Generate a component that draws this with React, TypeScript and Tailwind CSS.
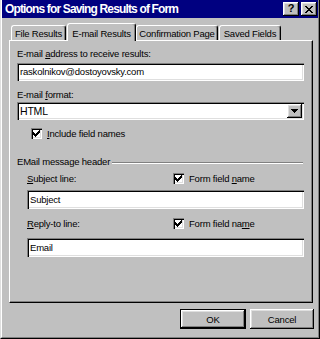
import React from "react"

const raised =
  "bg-[#c0c0c0] shadow-[inset_-1px_-1px_0_#000,inset_1px_1px_0_#fff,inset_-2px_-2px_0_#808080,inset_2px_2px_0_#dfdfdf]"
const sunken =
  "bg-white shadow-[inset_1px_1px_0_#808080,inset_2px_2px_0_#000,inset_-1px_-1px_0_#fff,inset_-2px_-2px_0_#dfdfdf]"

function Check() {
  return (
    <span className={`${sunken} w-[11px] h-[11px] flex items-center justify-center shrink-0`}>
      <svg width="7" height="7" viewBox="0 0 7 7" shapeRendering="crispEdges">
        <path d="M0 2h1v1h1v1h1v-1h1v-1h1v-1h1v-1h1v3h-1v1h-1v1h-1v1h-1v1h-1v-1h-1v-1h-1z" fill="#000" />
      </svg>
    </span>
  )
}

function Field({ value, h = "h-[19px]" }: { value: string; h?: string }) {
  return (
    <div className={`${sunken} ${h} flex items-center pl-[3px] text-black`}>
      <span className="leading-[12px]">{value}</span>
    </div>
  )
}

function Tab({ label, active, w }: { label: string; active?: boolean; w: string }) {
  if (active) {
    return (
      <div
        className={`${w} h-[18px] -mb-px relative z-10 bg-[#c0c0c0] border-t border-l border-white border-r border-r-black rounded-t-[3px] flex items-start justify-center pt-[4px] shadow-[inset_-1px_0_0_#808080]`}
      >
        <span className="leading-[12px] whitespace-nowrap">{label}</span>
      </div>
    )
  }
  return (
    <div
      className={`${w} h-[15px] bg-[#c0c0c0] border-t border-l border-white border-r border-r-black rounded-t-[3px] flex items-start justify-center pt-[2px] shadow-[inset_-1px_0_0_#808080]`}
    >
      <span className="leading-[12px] whitespace-nowrap">{label}</span>
    </div>
  )
}

export default function App() {
  return (
    <div className="w-[320px] h-[339px] bg-[#c0c0c0] font-['Liberation_Sans',Arial,sans-serif] text-[9.5px] tracking-[-0.2px] text-black border-l border-l-[#dfdfdf] border-r border-r-black border-b border-b-black">
      <div className="h-full border-l border-l-white border-r border-r-[#808080] border-b border-b-[#808080] flex flex-col">
        {/* title bar */}
        <div className="h-[18px] bg-[#000080] flex items-center pl-[3px] pr-[1px] shrink-0">
          <span className="text-white font-bold text-[12px] tracking-[-0.85px] leading-[14px] whitespace-nowrap">
            Options for Saving Results of Form
          </span>
          <div className="ml-auto flex gap-[2px]">
            <div className={`${raised} w-[16px] h-[14px] flex items-center justify-center`}>
              <span className="font-bold text-[11px] leading-[11px] pb-px tracking-normal">?</span>
            </div>
            <div className={`${raised} w-[16px] h-[14px] flex items-center justify-center`}>
              <svg width="8" height="7" viewBox="0 0 8 7" shapeRendering="crispEdges">
                <path
                  d="M0 0h2v1h1v1h2v-1h1v-1h2v1h-1v1h-1v1h-1v1h1v1h1v1h1v1h-2v-1h-1v-1h-2v1h-1v1h-2v-1h1v-1h1v-1h1v-1h-1v-1h-1v-1h-1z"
                  fill="#000"
                />
              </svg>
            </div>
          </div>
        </div>

        {/* tabs */}
        <div className="ml-[7px] w-[304px] h-[22px] flex items-end pl-[2px] shrink-0">
          <Tab label="File Results" w="w-[55px]" />
          <div className="w-px" />
          <Tab label="E-mail Results" active w="w-[69px]" />
          <Tab label="Confirmation Page" w="w-[82px]" />
          <div className="w-px" />
          <Tab label="Saved Fields" w="w-[62px]" />
        </div>

        {/* panel */}
        <div className="ml-[7px] w-[304px] h-[263px] border-t border-l border-white border-r border-b border-r-black border-b-black shadow-[inset_-1px_-1px_0_#808080] pl-[7px] pr-[8px] pt-[6px] flex flex-col shrink-0">
          <div className="leading-[13px] h-[13px]">
            E-mail <span className="underline">a</span>ddress to receive results:
          </div>
          <div className="mt-[3px]">
            <Field value="raskolnikov@dostoyovsky.com" h="h-[18px]" />
          </div>
          <div className="mt-[7px] leading-[13px] h-[13px]">
            E-mail <span className="underline">f</span>ormat:
          </div>
          <div className={`${sunken} mt-[1px] h-[18px] flex items-center pl-[3px] pr-[2px]`}>
            <span className="leading-[13px] text-[10.5px]">HTML</span>
            <div className={`${raised} ml-auto w-[15px] h-[14px] flex items-center justify-center`}>
              <svg width="7" height="4" viewBox="0 0 7 4" shapeRendering="crispEdges">
                <path d="M0 0h7v1h-1v1h-1v1h-1v1h-1v-1h-1v-1h-1v-1h-1z" fill="#000" />
              </svg>
            </div>
          </div>
          <div className="mt-[7px] h-[13px] flex items-center pl-[14px] gap-[5px]">
            <Check />
            <span className="leading-[13px]">
              <span className="underline">I</span>nclude field names
            </span>
          </div>

          {/* group header */}
          <div className="mt-[15px] h-[13px] flex items-center">
            <span className="leading-[13px]">EMail message header</span>
            <div className="flex-1 ml-[2px] mr-[1px] h-[2px] border-t border-t-[#808080] border-b border-b-white mt-[2px]" />
          </div>

          <div className="pl-[10px] flex flex-col">
            <div className="mt-[4px] h-[13px] flex items-center">
              <span className="w-[146px] leading-[13px]">
                <span className="underline">S</span>ubject line:
              </span>
              <Check />
              <span className="ml-[5px] leading-[13px]">
                Form field <span className="underline">n</span>ame
              </span>
            </div>
            <div className="mt-[5px]">
              <Field value="Subject" />
            </div>
            <div className="mt-[8px] h-[13px] flex items-center">
              <span className="w-[146px] leading-[13px]">
                <span className="underline">R</span>eply-to line:
              </span>
              <Check />
              <span className="ml-[5px] leading-[13px]">
                Form field na<span className="underline">m</span>e
              </span>
            </div>
            <div className="mt-[8px]">
              <Field value="Email" />
            </div>
          </div>
        </div>

        {/* buttons */}
        <div className="mt-[6px] flex justify-end gap-[4px] pr-[4px]">
          <div className="w-[66px] h-[20px] border border-black flex">
            <div className={`${raised} flex-1 flex items-center justify-center`}>
              <span className="leading-[13px]">OK</span>
            </div>
          </div>
          <div className={`${raised} w-[64px] h-[20px] flex items-center justify-center`}>
            <span className="leading-[13px]">Cancel</span>
          </div>
        </div>
      </div>
    </div>
  )
}
